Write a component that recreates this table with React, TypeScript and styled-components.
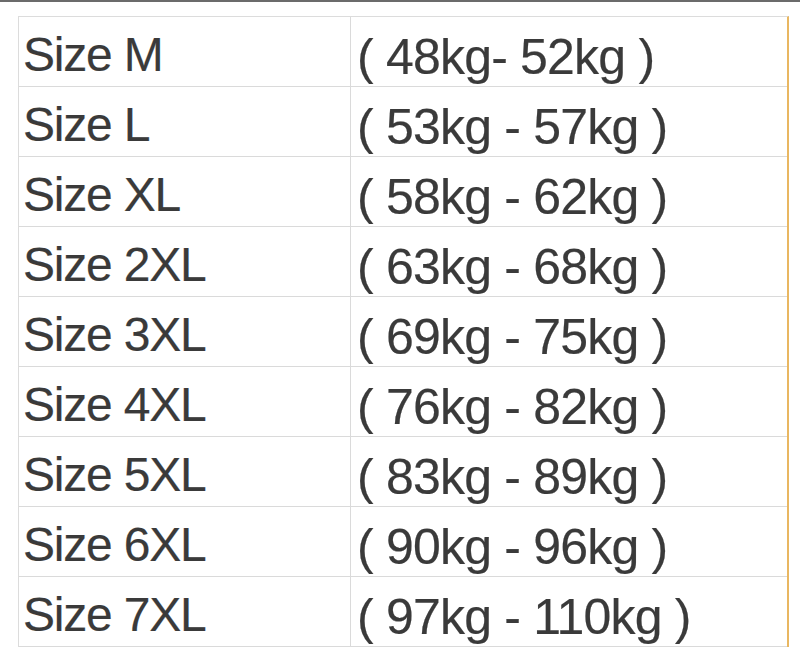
import React from "react";
import styled, { createGlobalStyle } from "styled-components";

const Global = createGlobalStyle`
  html, body { margin: 0; padding: 0; background: #ffffff; }
  body { font-family: "Liberation Sans", Arial, sans-serif; }
`;

const Page = styled.div`
  width: 800px;
  height: 656px;
  background: #ffffff;
  border-top: 2px solid #6b6b6b;
  box-sizing: border-box;
  padding: 14px 0 0 18px;
`;

const Table = styled.div`
  display: grid;
  grid-template-columns: 331px 437px;
  width: 771px;
  border-top: 1px solid #dcdcdc;
  border-left: 1px solid #dcdcdc;
  border-right: 2px solid #e9b761;
  box-sizing: border-box;
`;

const Cell = styled.div`
  height: 70px;
  box-sizing: border-box;
  border-bottom: 1px solid #dadada;
  color: #3a3a3a;
  -webkit-text-stroke: 0.2px #3a3a3a;
  white-space: nowrap;
`;

const SizeCell = styled(Cell)`
  padding: 5px 0 0 4px;
  line-height: 65px;
  font-size: 48px;
  letter-spacing: -1.2px;
`;

const WeightCell = styled(Cell)`
  border-left: 1px solid #dadada;
  padding: 14px 0 0 6px;
  line-height: 52px;
  font-size: 50px;
  letter-spacing: -0.8px;
`;

const rows: [string, string][] = [
  ["Size M", "( 48kg- 52kg )"],
  ["Size L", "( 53kg - 57kg )"],
  ["Size XL", "( 58kg - 62kg )"],
  ["Size 2XL", "( 63kg - 68kg )"],
  ["Size 3XL", "( 69kg - 75kg )"],
  ["Size 4XL", "( 76kg - 82kg )"],
  ["Size 5XL", "( 83kg - 89kg )"],
  ["Size 6XL", "( 90kg - 96kg )"],
  ["Size 7XL", "( 97kg - 110kg )"],
];

export default function App() {
  return (
    <>
      <Global />
      <Page>
        <Table>
          {rows.map(([s, w]) => (
            <React.Fragment key={s}>
              <SizeCell>{s}</SizeCell>
              <WeightCell>{w}</WeightCell>
            </React.Fragment>
          ))}
        </Table>
      </Page>
    </>
  );
}
